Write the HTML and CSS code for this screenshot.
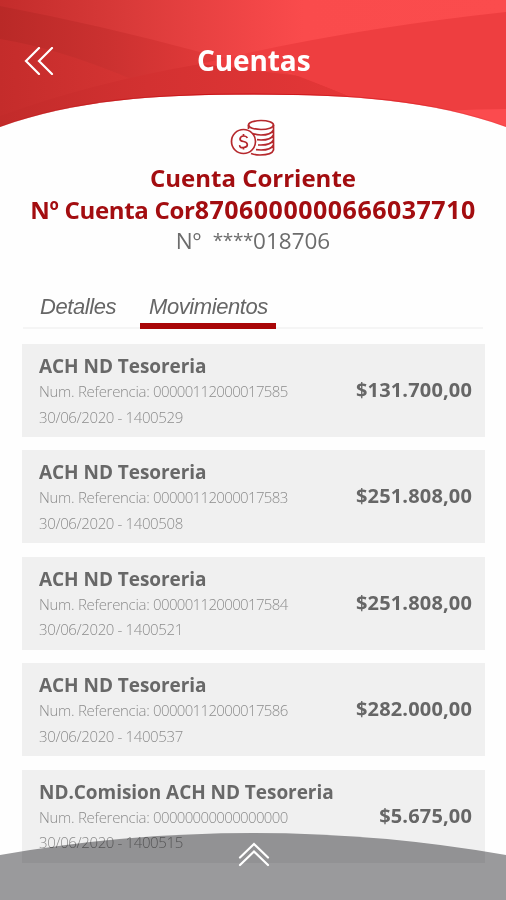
FILE: index.html
```html
<!DOCTYPE html>
<html lang="es">
  <head>
    <meta charset="UTF-8" />
    <meta name="viewport" content="width=device-width, initial-scale=1.0" />
    <title>Cuentas</title>
    <link rel="stylesheet" href="styles.css">
  </head>
  <body>
    <header class="header">
      <svg class="header-bg" viewBox="0 0 506 130" preserveAspectRatio="none">
        <defs>
          <linearGradient id="base" x1="0" y1="0" x2="1" y2="0">
            <stop offset="0" stop-color="#c32c2b" />
            <stop offset="0.25" stop-color="#d93a39" />
            <stop offset="0.5" stop-color="#f24647" />
            <stop offset="0.6" stop-color="#fa4b4c" />
            <stop offset="1" stop-color="#fb4c4d" />
          </linearGradient>
          <linearGradient id="band" x1="0" y1="0" x2="1" y2="0">
            <stop offset="0" stop-color="#b92927" />
            <stop offset="0.3" stop-color="#cb3130" />
            <stop offset="0.6" stop-color="#e33a3a" />
            <stop offset="1" stop-color="#ee3e40" />
          </linearGradient>
          <linearGradient id="low" x1="0" y1="0" x2="1" y2="0">
            <stop offset="0" stop-color="#c42c2b" />
            <stop offset="1" stop-color="#d93635" />
          </linearGradient>
          <linearGradient id="floor" x1="0" y1="0" x2="1" y2="0">
            <stop offset="0" stop-color="#c22b2a" />
            <stop offset="0.4" stop-color="#d33131" />
            <stop offset="1" stop-color="#e63738" />
          </linearGradient>
          <linearGradient id="edge" x1="0" y1="0" x2="1" y2="0">
            <stop offset="0" stop-color="#c01a1c" stop-opacity="0.3" />
            <stop offset="0.5" stop-color="#c80d12" />
            <stop offset="1" stop-color="#e02a2e" stop-opacity="0.2" />
          </linearGradient>
        </defs>
        <path d="M0 0H506V130H0Z" fill="url(#base)" />
        <path d="M0 6Q100 25 200 52L300 76L360 100V130H0Z" fill="url(#band)" />
        <path d="M0 39Q70 50 163 93L100 130H0Z" fill="url(#low)" />
        <path d="M0 116Q90 83 200 64L300 76L370 105V130H0Z" fill="url(#floor)" />
        <path d="M200 64Q340 30 506 12V130H420L350 96L290 73Z" fill="#ee3e40" />
        <path d="M440 111Q480 109 506 109V130H480Z" fill="#fb4b4e" />
        <path d="M0 127C76 99.500 158 94.500 253 94.500S430 99.500 506 127V131H0Z" fill="#fff" />
        <path d="M0 126.500C76 99 158 94 253 94S430 99 506 126.500" fill="none" stroke="url(#edge)" stroke-width="1.200" />
      </svg>
      <svg class="back" viewBox="0 0 30 28">
        <path d="M15 1L2 14L15 27M28 1L15 14L28 27" />
      </svg>
      <h1>Cuentas</h1>
    </header>

    <main>
      <section class="account">
        <svg class="coins" viewBox="0 0 46 38">
          <ellipse cx="31" cy="6" rx="12.500" ry="4.500" />
          <path d="M18.500 6V10M43.500 6V31Q42 36 30 36Q25 36 21 34.500M43.500 11Q41 16 31 16Q26 16 23 14.500M43.500 16Q41 21 31 21L27 20.700M43.500 21Q41 26 31 26H28M43.500 26Q41 31 31 31L26 30.700" />
          <circle cx="13.500" cy="22.500" r="12" />
          <path d="M17.300 19Q16.500 17 13.500 17T10 20Q10 22 13.500 22.500T17.300 25.500T13.500 28.500T9.700 26.200M13.500 15V17M13.500 28.500V30.500" />
        </svg>
        <h2 class="kind">Cuenta Corriente</h2>
        <h2 class="number">Nº Cuenta Cor<span>8706000000666037710</span></h2>
        <p class="masked">Nº&nbsp; <span>****</span>018706</p>
      </section>

      <nav class="tabs">
        <a class="tab details">Detalles</a>
        <a class="tab active">Movimientos</a>
      </nav>

      <ul class="list">
        <li class="card">
          <div>
            <h3>ACH ND Tesoreria</h3>
            <p class="ref">Num. Referencia: <span>00000112000017585</span></p>
            <p class="date">30/06/2020 - 1400529</p>
          </div>
          <strong>$131.700,00</strong>
        </li>
        <li class="card">
          <div>
            <h3>ACH ND Tesoreria</h3>
            <p class="ref">Num. Referencia: <span>00000112000017583</span></p>
            <p class="date">30/06/2020 - 1400508</p>
          </div>
          <strong>$251.808,00</strong>
        </li>
        <li class="card">
          <div>
            <h3>ACH ND Tesoreria</h3>
            <p class="ref">Num. Referencia: <span>00000112000017584</span></p>
            <p class="date">30/06/2020 - 1400521</p>
          </div>
          <strong>$251.808,00</strong>
        </li>
        <li class="card">
          <div>
            <h3>ACH ND Tesoreria</h3>
            <p class="ref">Num. Referencia: <span>00000112000017586</span></p>
            <p class="date">30/06/2020 - 1400537</p>
          </div>
          <strong>$282.000,00</strong>
        </li>
        <li class="card">
          <div>
            <h3>ND.Comision ACH ND Tesoreria</h3>
            <p class="ref">Num. Referencia: <span>00000000000000000</span></p>
            <p class="date">30/06/2020 - 1400515</p>
          </div>
          <strong>$5.675,00</strong>
        </li>
      </ul>
    </main>

    <svg class="drawer drawer-bg" viewBox="0 0 506 68">
      <path d="M0 23Q125 1 253 1T506 23V68H0Z" />
    </svg>
    <svg class="drawer drawer-arrow" viewBox="0 0 506 68">
      <path d="M240 25.500L254 12L268 25.500M240 33L254 19.500L268 33" />
    </svg>
  </body>
</html>
```
FILE: styles.css
```css
* {
  box-sizing: border-box;
  padding: 0;
  margin: 0;
}
body {
  width: 506px;
  height: 900px;
  overflow: hidden;
  position: relative;
  background-color: #fefefe;
  font-family: "Open Sans", "Noto Sans", sans-serif;
  color: #666;
}
.header {
  position: relative;
  height: 119px;
  display: flex;
  align-items: flex-start;
}
.header-bg {
  position: absolute;
  top: 0;
  left: 0;
  width: 506px;
  height: 130px;
}
.back {
  position: relative;
  width: 30px;
  height: 28px;
  margin: 47px 0 0 24px;
  fill: none;
  stroke: #fff;
  stroke-width: 2.2;
  stroke-linecap: round;
}
.header h1 {
  position: relative;
  margin: 40px 0 0 143px;
  font-size: 28px;
  line-height: 40px;
  letter-spacing: -0.1px;
  color: #fff;
}
.account {
  position: relative;
  display: flex;
  flex-direction: column;
  align-items: center;
  text-align: center;
  white-space: nowrap;
}
.coins {
  width: 46px;
  height: 38px;
  fill: none;
  stroke: #b5282c;
  stroke-width: 1.7;
}
.account h2 {
  height: 32px;
  font-size: 24px;
  line-height: 32px;
  color: #a30d10;
}
.account .kind {
  margin-top: 5px;
}
.account .number {
  letter-spacing: -0.3px;
}
.number span {
  font-size: 25px;
  line-height: 1;
  letter-spacing: 0.5px;
}
.masked {
  height: 30px;
  font-size: 22.5px;
  line-height: 30px;
  color: #6c6c6c;
}
.masked span {
  font-size: 19px;
  line-height: 1;
  letter-spacing: -0.4px;
  vertical-align: 2px;
}
.tabs {
  display: flex;
  height: 43px;
  margin: 30px 23px 0;
  border-bottom: 2px solid #f5f5f5;
  font-family: "Liberation Sans", Arial, sans-serif;
  font-style: italic;
  font-size: 22px;
  line-height: 41px;
  letter-spacing: -0.42px;
  color: #666;
}
.tab {
  height: 43px;
}
.details {
  width: 117px;
  padding-left: 17px;
}
.active {
  width: 136px;
  padding-left: 9px;
  border-bottom: 6px solid #a90608;
}
.list {
  display: flex;
  flex-direction: column;
  gap: 13.4px;
  margin: 15px 21px 0 22px;
  list-style: none;
}
.card {
  display: flex;
  justify-content: space-between;
  height: 93px;
  padding: 9px 13px 0 17px;
  background-color: #f0f0f0;
  white-space: nowrap;
}
.card h3 {
  font-size: 19px;
  line-height: 26px;
  letter-spacing: -0.05px;
  color: #686868;
}
.card p {
  font-size: 15px;
  font-weight: 300;
  line-height: 25.5px;
  color: #8c8c8c;
}
.card .ref {
  letter-spacing: -0.3px;
}
.ref span {
  letter-spacing: -0.65px;
}
.card .date {
  letter-spacing: -0.37px;
}
.card strong {
  margin-top: 23px;
  font-size: 20px;
  line-height: 27px;
  letter-spacing: 0.15px;
  color: #666;
}
.drawer {
  position: absolute;
  left: 0;
  bottom: 0;
  width: 506px;
  height: 68px;
}
.drawer-bg {
  fill: #9b9b9d;
  mix-blend-mode: multiply;
}
.drawer-arrow {
  fill: none;
  stroke: #fff;
  stroke-width: 2.2;
  stroke-linecap: round;
}
```
